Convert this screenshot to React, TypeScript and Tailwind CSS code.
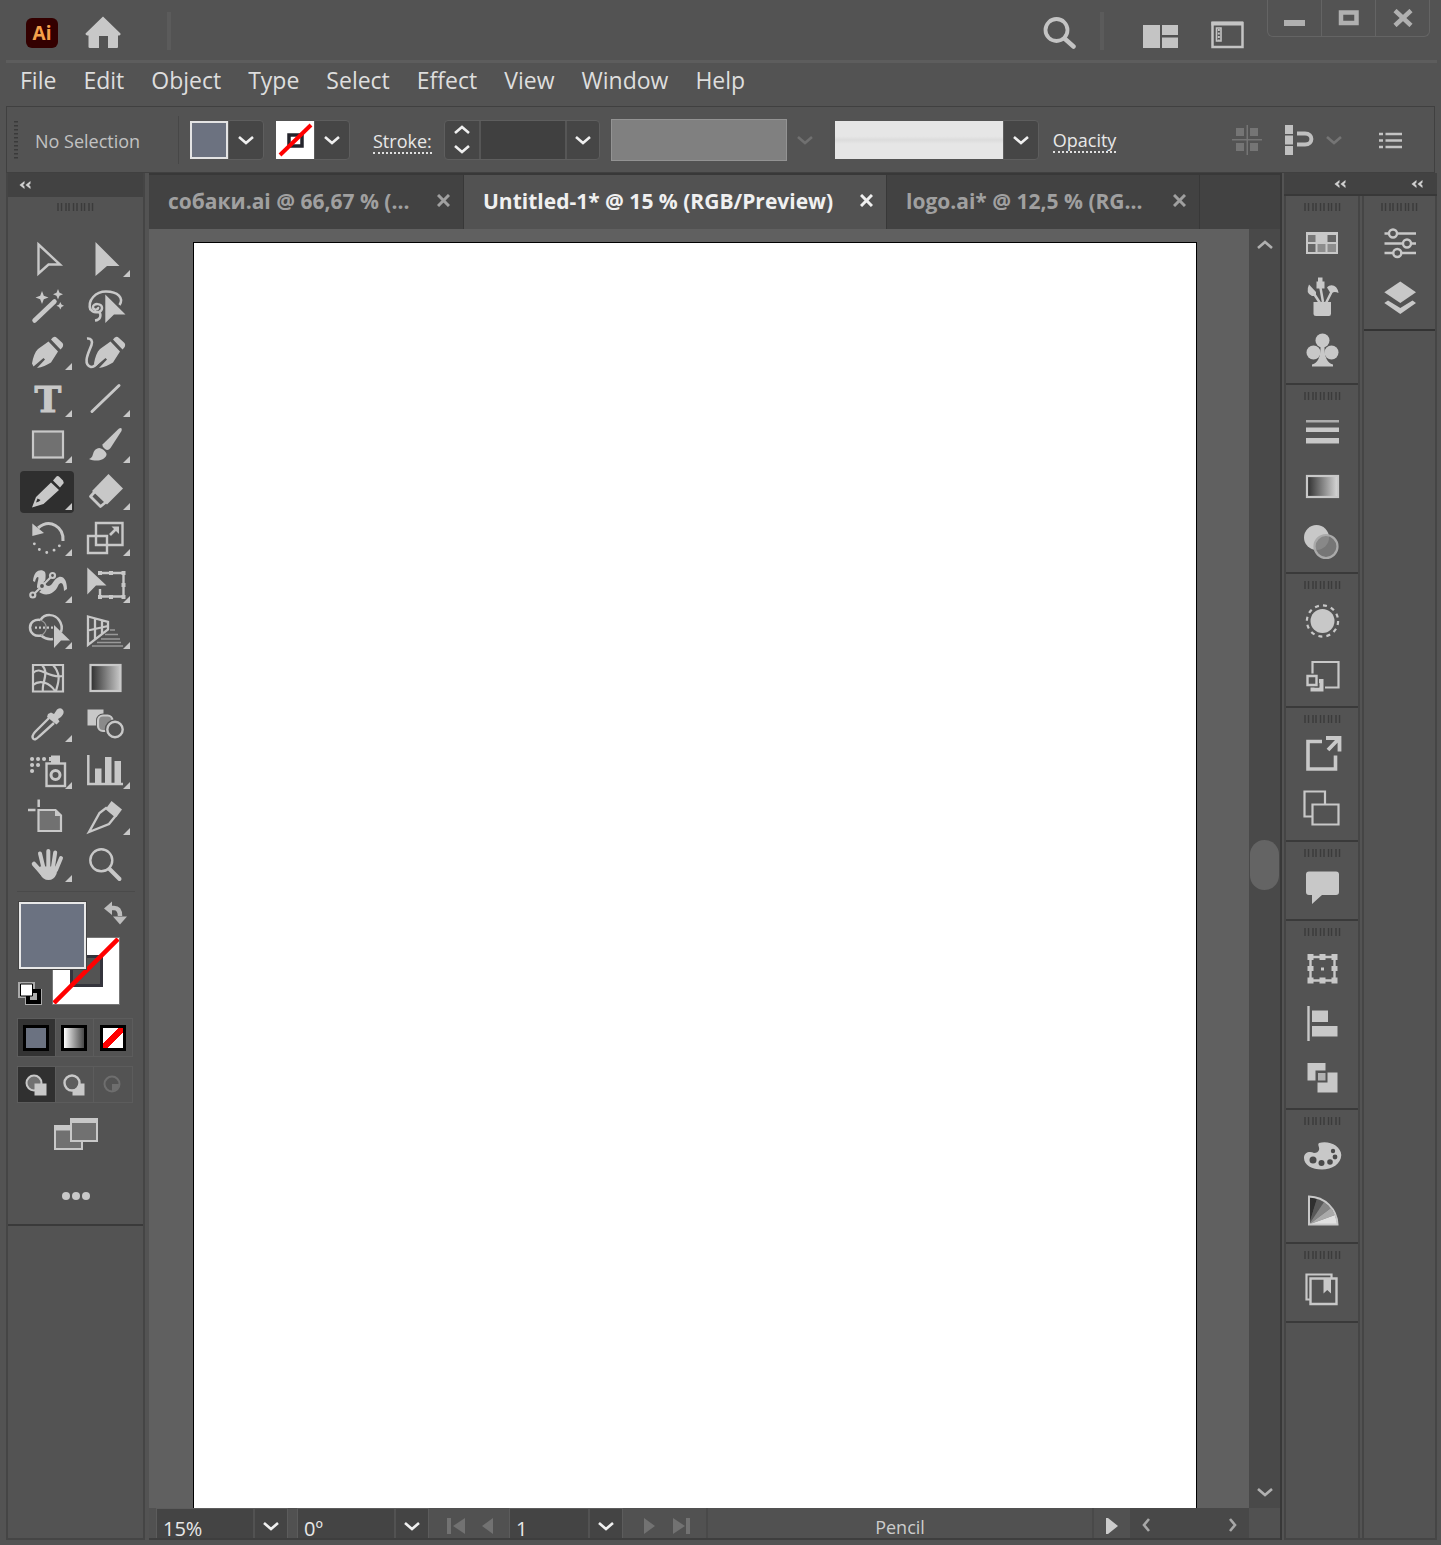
import React from "react";

type IconProps = { children: React.ReactNode };

const ToolIcon: React.FC<IconProps> = ({ children }) => (
  <svg viewBox="0 0 54 42" className="w-[54px] h-[42px] overflow-visible" fill="none" stroke="#c8c8c8" strokeWidth="2.200">
    {children}
  </svg>
);

const PanelIcon: React.FC<IconProps> = ({ children }) => (
  <svg viewBox="0 0 54 54" className="w-[54px] h-[54px]" fill="none" stroke="#c8c8c8" strokeWidth="2.200">
    {children}
  </svg>
);

const Chevron: React.FC<{ dir?: "down" | "up" | "left" | "right"; color?: string }> = ({
  dir = "down",
  color = "#f0f0f0",
}) => {
  const paths = {
    down: "M1 5l7 6l7-6",
    up: "M1 11l7-6l7 6",
    left: "M11 2l-5 6l5 6",
    right: "M5 2l5 6l-5 6",
  };
  return (
    <svg viewBox="0 0 16 16" className="w-4 h-4 shrink-0" fill="none" stroke={color} strokeWidth="2.6">
      <path d={paths[dir]} />
    </svg>
  );
};

const Collapse = () => (
  <svg viewBox="0 0 12 8" className="w-3 h-2" fill="#cfcfcf">
    <path d="M5.500 0V2.500L4 4L5.500 5.500V8L0.500 4ZM11.500 0V2.500L10 4L11.500 5.500V8L6.500 4Z" />
  </svg>
);

const Grip = () => (
  <svg viewBox="0 0 37 8" className="w-[37px] h-2" stroke="#3b3b3b" strokeWidth="1.400">
    <path d="M1 0v8M4.500 0v8M9 0v8M12 0v8M16.500 0v8M20 0v8M24.500 0v8M27.500 0v8M32 0v8M35.500 0v8" />
  </svg>
);

const PenShape = () => (
  <>
    <path
      d="M12 32.500C13 26 15 21 18 18L28.500 10.500L38 20.500L31 31.500C27 34 22 36.500 17 37L25 28.500L23.500 27L13.500 35.500Z"
      fill="#c8c8c8"
      stroke="none"
    />
    <path d="M31 8.500Q34 4 37 7L42.500 12Q44.500 15 40.500 18.500Z" fill="#c8c8c8" stroke="none" />
  </>
);

const tools: { name: string; more?: boolean; active?: boolean; icon: React.ReactNode }[] = [
  {
    name: "Direct Selection",
    icon: <path d="M18.500 6.500L40 26.500L28.500 26.500L18.500 35.500Z" strokeWidth="2.400" />,
  },
  {
    name: "Selection",
    more: true,
    icon: <path d="M17.500 4L41.500 28H29L17.500 38Z" fill="#c8c8c8" stroke="none" />,
  },
  {
    name: "Magic Wand",
    icon: (
      <>
        <path d="M14.500 35.500L34.500 16.500" strokeWidth="4.500" strokeLinecap="round" />
        <g fill="#c8c8c8" stroke="none">
          <path d="M22 6L23.800 10.700L28.500 12.500L23.800 14.300L22 19L20.200 14.300L15.500 12.500L20.200 10.700Z" />
          <path d="M38 4L39.500 7.700L43 9.200L39.500 10.700L38 14.500L36.500 10.700L33 9.200L36.500 7.700Z" />
          <path d="M40.300 17L41.500 19.600L44 20.800L41.500 22L40.300 24.500L39.100 22L36.500 20.800L39.100 19.600Z" />
        </g>
      </>
    ),
  },
  {
    name: "Lasso",
    icon: (
      <>
        <path d="M12.500 25C9 15 18 6.500 28 6.500C40 6.500 46 13 41.500 20" strokeWidth="2.500" />
        <path d="M12.500 24C15 29 24 28 24 23C24 18 15 18 15 22C15 26 21 25 20 22M21 26C24 31 22 35 17 35.500" strokeWidth="2.500" />
        <path d="M27.300 9.500L47.500 29.500H36L27.300 38Z" fill="#c8c8c8" stroke="none" />
      </>
    ),
  },
  { name: "Pen", more: true, icon: <PenShape /> },
  {
    name: "Curvature",
    icon: (
      <>
        <path d="M9 7.500C13 7 15 10 13.500 14C11 21 4 33 13 36C16 36 18 34 20 31" strokeWidth="2.600" />
        <g transform="translate(4 0)">
          <PenShape />
        </g>
      </>
    ),
  },
  {
    name: "Type",
    more: true,
    icon: (
      <text x="28" y="34" textAnchor="middle" className="font-['DejaVu_Serif'] font-bold text-[36px] leading-9" fill="#c8c8c8" stroke="#c8c8c8" strokeWidth="1">
        T
      </text>
    ),
  },
  { name: "Line Segment", more: true, icon: <path d="M14 33.500L41 7.500" strokeWidth="3" strokeLinecap="round" /> },
  { name: "Rectangle", more: true, icon: <rect x="13" y="7.500" width="30" height="26" fill="#717171" /> },
  {
    name: "Paintbrush",
    more: true,
    icon: (
      <g fill="#c8c8c8" stroke="none">
        <path d="M41 4.500Q44.500 2.500 43.500 7L32.500 24Q30 27.500 27 25T24.500 20.500Z" />
        <path d="M11 35C16 33.500 14 28.500 17.500 25.500Q21 22.500 25 25.500T28.500 31C26 37.500 17 37.500 11 35Z" />
      </g>
    ),
  },
  {
    name: "Pencil",
    more: true,
    active: true,
    icon: (
      <g fill="#c8c8c8" stroke="none">
        <path fillRule="evenodd" d="M12 36.500L16 26L31 11.500L39 19L23.500 33ZM16 31.500L19 30.500L20.500 29L17.500 27.500Z" />
        <path d="M33 9.500L36 6Q37.500 4 39.500 6L43 9.500Q44.500 11.500 42.500 13.500L40 16.500Z" />
      </g>
    ),
  },
  {
    name: "Eraser",
    more: true,
    icon: (
      <>
        <path d="M30.500 3L45 17.500L29 33.500L14 20Z" fill="#c8c8c8" stroke="none" />
        <path d="M17 20.500L12.500 25.500L22.500 35.500L28 31Z" fill="#535353" strokeWidth="2.800" strokeLinejoin="round" />
      </>
    ),
  },
  {
    name: "Rotate",
    more: true,
    icon: (
      <>
        <path d="M18 11C30 1 44 10 43 24" strokeWidth="3" />
        <path d="M12.300 6.500V19L24 16Z" fill="#c8c8c8" stroke="none" />
        <path d="M14.300 26.800h.1M19.300 32.500h.1M26.700 35.500h.1M34 33.200h.1M39.300 28.800h.1" strokeWidth="2.800" strokeLinecap="round" />
      </>
    ),
  },
  {
    name: "Scale",
    more: true,
    icon: (
      <>
        <path d="M18 6H44.500V28H18ZM10 19H29V36H10Z" strokeWidth="2.400" />
        <path d="M32 18L38 12" strokeWidth="2.600" />
        <path d="M33.500 9.500H41V17Z" fill="#c8c8c8" stroke="none" />
      </>
    ),
  },
  {
    name: "Width",
    more: true,
    icon: (
      <>
        <path
          d="M13 17C14 5 22 5 25 8C27 12 23 21 28 22C33 22 33 15 39 13C44 12 47 17 47 25L44 27C44 20 41 16 38 22C34 31 24 33 18 27C15 23 20 13 18 13Q16 13 15 18Z"
          fill="#c8c8c8"
          stroke="none"
        />
        <path d="M13 31L22 22.500L32.500 12" stroke="#535353" strokeWidth="4" />
        <path d="M14 30L32 12" />
        <g fill="#535353">
          <circle cx="32.500" cy="11.500" r="2.500" />
          <circle cx="22" cy="22" r="3" />
          <circle cx="12.800" cy="31" r="2.500" />
        </g>
      </>
    ),
  },
  {
    name: "Free Transform",
    more: true,
    icon: (
      <>
        <path d="M22 9H45.500V32.500H22V25" strokeWidth="2.400" />
        <path d="M20 7h4v4h-4zM31 7h4v4h-4zM43.500 7h4v4h-4zM43.500 19h4v4h-4zM43.500 31h4v4h-4zM31 31h4v4h-4zM20 31h4v4h-4z" fill="#c8c8c8" stroke="none" />
        <path d="M9.300 3.500L28.500 21.500H18L9.300 30.500Z" fill="#c8c8c8" stroke="none" />
      </>
    ),
  },
  {
    name: "Shape Builder",
    more: true,
    icon: (
      <>
        <path d="M20.500 10C25 3 35 4 39 10C42 14 42 19 41 22M33 29C28 30 24 28 21 25.500C15 27 10 23 10 17.500C10 12 15 9 20.500 10" strokeWidth="2.500" />
        <path d="M20.500 10C28 13 28 22 21 25.500" strokeWidth="1.200" stroke="#9c9c9c" />
        <path d="M15 17.700H34" strokeDasharray="2 2" strokeWidth="2.200" />
        <path d="M34 15L50 30.500H41L34 38Z" fill="#c8c8c8" stroke="none" />
      </>
    ),
  },
  {
    name: "Perspective Grid",
    more: true,
    icon: (
      <>
        <path d="M10 6.500L30 12V19.500L10 35ZM17 8V29.500M24 10V24M10 20.500L30 16" strokeWidth="2.300" />
        <path d="M32 20h5M27 24.500h13M23 29h19M19 32.500h24M14 36h31" stroke="#999999" strokeWidth="1.500" />
      </>
    ),
  },
  {
    name: "Mesh",
    icon: (
      <>
        <path d="M13 8H43V34.500H13Z" />
        <path d="M13 16C21 8 27 22 43 19M13 28C20 22 30 26 35 34M22 8C30 16 21 27 23 34M33 8C42 18 38 26 36 34" />
      </>
    ),
  },
  {
    name: "Gradient",
    icon: (
      <>
        <defs>
          <linearGradient id="tool-gradient">
            <stop offset="0" stopColor="#2e2e2e" />
            <stop offset="1" stopColor="#c8c8c8" />
          </linearGradient>
        </defs>
        <rect x="12.500" y="8" width="30" height="26" fill="url(#tool-gradient)" />
      </>
    ),
  },
  {
    name: "Eyedropper",
    more: true,
    icon: (
      <>
        <path d="M29 15L15 29Q11.500 33 13 35.500T19 33.500L34 20" strokeWidth="2.400" />
        <path d="M28 11L31 9.500L34 11L37 6.500Q41 4 43 7T41 14L38 16L39.500 18.500L36.500 21.500L27 14Z" fill="#c8c8c8" stroke="none" />
      </>
    ),
  },
  {
    name: "Blend",
    icon: (
      <>
        <path d="M9.500 6.500h16v16h-16z" fill="#c8c8c8" stroke="none" />
        <rect x="20" y="12.500" width="14.500" height="15.500" rx="5" fill="#8a8a8a" stroke="#535353" strokeWidth="4" />
        <rect x="20" y="12.500" width="14.500" height="15.500" rx="5" fill="#8a8a8a" />
        <circle cx="37" cy="26.500" r="7.700" fill="#535353" stroke="#535353" strokeWidth="5" />
        <circle cx="37" cy="26.500" r="7.700" strokeWidth="2.400" />
      </>
    ),
  },
  {
    name: "Symbol Sprayer",
    more: true,
    icon: (
      <>
        <path d="M12 9h.1M18 9h.1M24 9h.1M12 15h.1M18 15h.1M12 21h.1" strokeWidth="4" strokeLinecap="round" />
        <rect x="26.500" y="13.500" width="18.500" height="22.500" strokeWidth="2.400" />
        <path d="M31 5.500h9v8h-9zM29 7h3v4h-3z" fill="#c8c8c8" stroke="none" />
        <circle cx="35.500" cy="25" r="4.500" strokeWidth="3" />
      </>
    ),
  },
  {
    name: "Column Graph",
    more: true,
    icon: (
      <>
        <path d="M10.300 5V34H45" strokeWidth="2.500" />
        <path d="M17 18.500h6.500V34H17zM27 7h6.500v27H27zM36.500 11H43v23h-6.500z" fill="#c8c8c8" stroke="none" />
      </>
    ),
  },
  {
    name: "Artboard",
    icon: (
      <>
        <path d="M18.700 3.500V11M8 14H15.500" strokeWidth="2.500" />
        <path d="M18.500 14H35.500L41 19.500V35H18.500Z" fill="#717171" />
        <path d="M35 13L42 20H35Z" fill="#c8c8c8" stroke="none" />
      </>
    ),
  },
  {
    name: "Slice",
    more: true,
    icon: (
      <>
        <path d="M11 36L21.500 17L28 12L37.500 20L31 28Z" strokeWidth="2.400" />
        <path d="M33.500 5L44 13.500L38.500 21L28 12.500Z" fill="#c8c8c8" stroke="none" />
      </>
    ),
  },
  {
    name: "Hand",
    more: true,
    icon: (
      <g strokeLinecap="round">
        <path d="M28.300 8V24M20 10.500L23.500 25M35.200 9.500L33 24M41 15L36 27" strokeWidth="4" />
        <path d="M14 21L22 30" strokeWidth="4.500" />
        <path d="M20 23.500H38L36.500 31Q34 37 28.500 37Q23 37 20 31L17 27Z" fill="#c8c8c8" stroke="none" />
      </g>
    ),
  },
  {
    name: "Zoom",
    icon: (
      <>
        <circle cx="23.300" cy="17.300" r="11" strokeWidth="2.400" />
        <path d="M31.500 26L41.500 36" strokeWidth="4" strokeLinecap="round" />
      </>
    ),
  },
];

const panelGroups: { name: string; icon: React.ReactNode }[][] = [
  [
    {
      name: "Swatches",
      icon: (
        <>
          <path d="M11 15h32v22H11z" fill="#c8c8c8" stroke="none" />
          <path d="M13 18h7.500v7H13z" fill="#777777" stroke="none" />
          <path d="M32.500 18H41v7h-8.500z" fill="#666666" stroke="none" />
          <path d="M13 27h7.500v8H13z" fill="#666666" stroke="none" />
          <path d="M22.500 27h8v8h-8zM32.500 27H41v8h-8.500z" fill="#8d8d8d" stroke="none" />
        </>
      ),
    },
    {
      name: "Brushes",
      icon: (
        <>
          <path d="M18.500 21L25 31M25 13L28 30M38 17L31 31" strokeWidth="2.500" />
          <path d="M14 12.500L21 20V24H17Q10 21 14 12.500ZM23 5.500h4.500v4h2v7h-8v-7H23zM32 15.500C36 11 43 14 43.500 21C40 19 37 20 36 22Z" fill="#c8c8c8" stroke="none" />
          <path d="M18.500 30H36V41.500Q36 44 34 44H21Q18.500 44 18.500 41.500Z" fill="#c8c8c8" stroke="none" />
        </>
      ),
    },
    {
      name: "Symbols",
      icon: (
        <g fill="#c8c8c8" stroke="none">
          <circle cx="27.500" cy="13.500" r="7" />
          <circle cx="18.500" cy="25.500" r="7" />
          <circle cx="36.500" cy="25.500" r="7" />
          <path d="M25.500 19H29.500Q29 35 38 37.500V39.500H17V37.500Q26 35 25.500 19Z" />
        </g>
      ),
    },
  ],
  [
    {
      name: "Stroke",
      icon: (
        <g fill="#c8c8c8" stroke="none">
          <path d="M11 14h33v2.500H11z" fill="#adadad" />
          <path d="M11 21.500h33V26H11zM11 32h33v5.500H11z" />
        </g>
      ),
    },
    {
      name: "Gradient",
      icon: (
        <>
          <defs>
            <linearGradient id="panel-gradient">
              <stop offset="0" stopColor="#2e2e2e" />
              <stop offset="1" stopColor="#d8d8d8" />
            </linearGradient>
          </defs>
          <rect x="12" y="15" width="31" height="21" fill="url(#panel-gradient)" />
        </>
      ),
    },
    {
      name: "Transparency",
      icon: (
        <>
          <circle cx="21.500" cy="21.500" r="12.500" fill="#c8c8c8" stroke="none" />
          <circle cx="31" cy="30.500" r="11.500" fill="#7c7c7c" fillOpacity="0.85" stroke="#aaaaaa" />
        </>
      ),
    },
  ],
  [
    {
      name: "Appearance",
      icon: (
        <>
          <circle cx="27.500" cy="26" r="12" fill="#c8c8c8" stroke="none" />
          <circle cx="27.500" cy="26" r="15.600" strokeDasharray="4 4.170" />
        </>
      ),
    },
    {
      name: "Graphic Styles",
      icon: (
        <>
          <path d="M17.500 12H43.500V37.500H17.500Z" />
          <path d="M17.500 31H26.500V39.500H17.500Z" fill="#535353" stroke="#535353" strokeWidth="7" />
          <path d="M17.500 31H26.500V39.500H17.500Z" strokeWidth="4" />
          <path d="M12.500 26h9v9h-9z" fill="#535353" stroke="#535353" strokeWidth="5" />
          <path d="M12.500 26h9v9h-9z" fill="#535353" strokeWidth="2.400" />
        </>
      ),
    },
  ],
  [
    {
      name: "Asset Export",
      icon: (
        <>
          <path d="M27 12.500H13V40H40.500V26.500" strokeWidth="3.600" />
          <path d="M31 9H44.500V22.500M44 9.500L33 21" strokeWidth="3.800" />
        </>
      ),
    },
    { name: "Artboards", icon: <path d="M17.500 32.500H9.500V7.500H30V20M17.500 20.500H43.500V40.500H17.500Z" /> },
  ],
  [
    {
      name: "Comments",
      icon: <path d="M14 8.500H41Q44 8.500 44 11.500V29Q44 32 41 32H27L17 41V32H14Q11 32 11 29V11.500Q11 8.500 14 8.500Z" fill="#c8c8c8" stroke="none" />,
    },
  ],
  [
    {
      name: "Transform",
      icon: (
        <>
          <path d="M15.500 15H39.500V38.500H15.500Z" strokeWidth="2.400" />
          <path
            d="M12.500 12h6v6h-6zM24.500 12h6v6h-6zM36.500 12h6v6h-6zM12.500 24h6v5h-6zM36.500 24h6v5h-6zM12.500 35.500h6v6h-6zM24.500 35.500h6v6h-6zM36.500 35.500h6v6h-6zM26 25.500h3v3h-3z"
            fill="#c8c8c8"
            stroke="none"
          />
        </>
      ),
    },
    {
      name: "Align",
      icon: (
        <>
          <path d="M13.500 9V44" strokeWidth="2.400" />
          <path d="M17 13.500h16v11.500H17zM17 29h25.500v10.500H17z" fill="#c8c8c8" stroke="none" />
        </>
      ),
    },
    {
      name: "Pathfinder",
      icon: (
        <>
          <path d="M12.500 11H30.500V18.500H20.500V28.500H12.500ZM32.500 20.500H42.500V40.500H22.500V30.500H32.500Z" fill="#c8c8c8" stroke="none" />
          <path d="M23 21h7.500v7.500H23z" fill="#b0b0b0" stroke="none" />
        </>
      ),
    },
  ],
  [
    {
      name: "Color",
      icon: (
        <>
          <path d="M24 19C25 16 22 14 24 12C34 9 46 15 46.300 24C46 33 37 38.500 27 38.500C17 38.500 9 34 9 27C9 21 15 20 19 22C22 22 23 21 24 19Z" fill="#c8c8c8" stroke="none" />
          <g fill="#4a4a4a" stroke="none">
            <circle cx="18" cy="29" r="3.500" />
            <circle cx="26.500" cy="32" r="3" />
            <circle cx="35" cy="31" r="2.800" />
            <circle cx="40" cy="26" r="2.400" />
            <circle cx="38" cy="20" r="2.200" />
          </g>
        </>
      ),
    },
    {
      name: "Color Guide",
      icon: (
        <g stroke="none">
          <path d="M14 38.500V11L22 12.500Z" fill="#303030" />
          <path d="M14 38.500L22 12.500L29 16Z" fill="#585858" />
          <path d="M14 38.500L29 16L36 22Z" fill="#858585" />
          <path d="M14 38.500L36 22L40 29Z" fill="#aaaaaa" />
          <path d="M14 38.500L40 29L42.500 38.500Z" fill="#e0e0e0" />
          <path d="M14 10.500C30 11 42 23 42.500 38.500H14Z" stroke="#c8c8c8" strokeWidth="2" />
        </g>
      ),
    },
  ],
  [
    {
      name: "Libraries",
      icon: (
        <>
          <path d="M15 34.500H11.500V9.500H36.500V13" />
          <path d="M15.500 13.500H41.500V39H15.500Z" strokeWidth="2.400" />
          <path d="M28.500 13.500H36V28.500L32.200 25L28.500 28.500Z" fill="#c8c8c8" stroke="none" />
        </>
      ),
    },
  ],
];

const sidePanel = [
  {
    name: "Properties",
    icon: (
      <g strokeWidth="2.400">
        <path d="M11.500 16.500h4.500M24 16.500h19M11.500 26.500h18M38 26.500h5M11.500 36h8.500M28.500 36H43" />
        <circle cx="20" cy="16.500" r="4" />
        <circle cx="34" cy="26.500" r="4" />
        <circle cx="24.300" cy="36" r="4" />
      </g>
    ),
  },
  {
    name: "Layers",
    icon: (
      <g fill="#c8c8c8" stroke="none">
        <path d="M11.300 20.200L27.300 9.500L43 20.200L27.300 31Z" />
        <path d="M11.300 31L15 28.500L27.300 36L39.500 28.500L43 31L27.300 42Z" />
      </g>
    ),
  },
];

const menuItems = ["File", "Edit", "Object", "Type", "Select", "Effect", "View", "Window", "Help"];

const TitleBar = () => (
  <header className="flex h-[60px] items-start">
    <span className="ml-[26px] mt-[18px] flex h-[30px] w-8 items-center justify-center rounded-md bg-[#330000] text-[19px] font-bold text-[#f5a04a]">
      Ai
    </span>
    <button aria-label="Home" className="ml-[27px] mt-4">
      <svg viewBox="0 0 36 32" className="h-8 w-9" fill="#c8c8c8">
        <path d="M18 0.500L35.500 17.500Q36 19.500 33 19.500V31Q33 32 32 32H23V20H14V32H5Q3.500 32 3.500 31V19.500Q0.500 19.500 0.500 17.500Z" />
      </svg>
    </button>
    <span className="ml-[46px] mt-3 h-[38px] w-1 bg-[#5b5b5b]" />
    <div className="ml-auto flex">
      <button aria-label="Search" className="mt-[14px]">
        <svg viewBox="0 0 33 33" className="h-[33px] w-[33px]" fill="none" stroke="#c4c4c4">
          <circle cx="13.500" cy="14" r="11" strokeWidth="3.800" />
          <path d="M21.500 22.500L30.500 30.500" strokeWidth="4.500" strokeLinecap="round" />
        </svg>
      </button>
      <span className="ml-6 mt-3 h-[38px] w-1 bg-[#5b5b5b]" />
      <button aria-label="Arrange Documents" className="ml-[39px] mt-[22px]">
        <svg viewBox="0 0 36 23" className="h-[23px] w-9" fill="#c4c4c4">
          <path d="M0 0h17v23H0zM19 0h16v10H19zM19 12.500h16V23H19z" />
        </svg>
      </button>
      <button aria-label="Switch Workspace" className="ml-8 mt-[19px]">
        <svg viewBox="0 0 33 28" className="h-7 w-[33px]" fill="none" stroke="#c4c4c4">
          <path d="M1.500 2H31.500V26H1.500Z" strokeWidth="2.500" />
          <path d="M0.500 2.500H32" strokeWidth="4" />
          <path d="M5.500 7H10V20H5.500Z" strokeWidth="1.600" />
          <path d="M7.800 8V20" strokeWidth="2" strokeDasharray="2 1.500" />
        </svg>
      </button>
      <div className="ml-[23px] mr-[11px] flex h-[37px] w-[163px] divide-x divide-[#646464] rounded-b-md border border-t-0 border-[#646464]">
        <button aria-label="Minimize" className="flex flex-1 items-center justify-center">
          <svg viewBox="0 0 22 18" className="h-[18px] w-[22px]" fill="#b0b0b0">
            <path d="M0 11h21v6H0z" />
          </svg>
        </button>
        <button aria-label="Maximize" className="flex flex-1 items-center justify-center">
          <svg viewBox="0 0 22 18" className="h-[18px] w-[22px]" fill="none" stroke="#b0b0b0" strokeWidth="4.500">
            <path d="M3 3.500H18.500V14H3Z" />
          </svg>
        </button>
        <button aria-label="Close" className="flex flex-1 items-center justify-center">
          <svg viewBox="0 0 22 18" className="h-[18px] w-[22px]" fill="none" stroke="#b0b0b0" strokeWidth="4.500">
            <path d="M3 1.500L19 16.500M19 1.500L3 16.500" />
          </svg>
        </button>
      </div>
    </div>
  </header>
);

const MenuBar = () => (
  <nav className="ml-[6px] mr-1 flex h-[46px] items-start gap-[27px] border-t-[3px] border-[#5d5d5d] pl-[14px] text-[23px] leading-[34px] text-[#dedede]">
    {menuItems.map((item) => (
      <button key={item}>{item}</button>
    ))}
  </nav>
);

const DropButton: React.FC<{ label: string; muted?: boolean }> = ({ label, muted }) =>
  muted ? (
    <button aria-label={label} className="flex h-10 w-9 items-center justify-center">
      <Chevron color="#707070" />
    </button>
  ) : (
    <button
      aria-label={label}
      className="flex h-10 w-9 items-center justify-center rounded-r border border-[#5e5e5e] bg-[#464646]"
    >
      <Chevron />
    </button>
  );

const ControlBar = () => (
  <section className="mx-[6px] flex h-[67px] items-center border border-[#404040] pl-[6px] text-lg font-medium">
    <svg viewBox="0 0 6 38" className="h-[38px] w-[6px]" stroke="#3a3a3a" strokeWidth="4">
      <path d="M3 0V38" strokeDasharray="1.600 2.400" />
    </svg>
    <span className="ml-4 w-[143px] pt-[3px] text-[#c2c2c2]">No Selection</span>
    <span className="h-12 w-px bg-[#474747]" />
    <button aria-label="Fill" className="ml-[11px] h-[38px] w-[38px] border-2 border-[#e4e4e4] bg-[#6c7280]" />
    <DropButton label="Fill options" />
    <button aria-label="Stroke color" className="ml-3 h-[38px] w-[38px] bg-white">
      <svg viewBox="0 0 38 38" className="h-[38px] w-[38px]" fill="none">
        <path d="M13 14H26V25H13Z" stroke="#24242c" strokeWidth="3.500" />
        <path d="M4 34L35 4" stroke="#ff0000" strokeWidth="4" />
      </svg>
    </button>
    <DropButton label="Stroke color options" />
    <label htmlFor="stroke" className="ml-[23px] mt-1 border-b-2 border-dotted border-[#e0e0e0] leading-[22px] text-[#e8e8e8]">
      Stroke:
    </label>
    <div className="ml-3 flex h-10 rounded border border-[#5e5e5e] bg-[#464646]">
      <div className="flex w-[34px] flex-col items-center justify-center gap-[3px]">
        <button aria-label="Increase stroke"><Chevron dir="up" /></button>
        <button aria-label="Decrease stroke"><Chevron /></button>
      </div>
      <input id="stroke" className="w-[88px] border-x-2 border-[#565656] bg-[#404040] px-2 text-white" />
      <button aria-label="Stroke presets" className="flex w-8 items-center justify-center">
        <Chevron />
      </button>
    </div>
    <button aria-label="Width profile" className="ml-[11px] h-[42px] w-44 border border-[#939393] bg-[#808080]" />
    <DropButton label="Profile options" muted />
    <button aria-label="Brush definition" className="ml-3 h-[38px] w-[168px] bg-[linear-gradient(#e6e6e6_40%,#dcdcdc_50%,#e6e6e6_60%)]" />
    <DropButton label="Brush options" />
    <button className="ml-[14px] mt-[3px] border-b-2 border-dotted border-[#e0e0e0] leading-[22px] text-[#e8e8e8]">Opacity</button>
    <div className="ml-auto flex items-center">
      <button aria-label="Align">
        <svg viewBox="0 0 30 30" className="h-[30px] w-[30px]" fill="#757575">
          <path d="M4 3h8v8H4zM18 3h8v8h-8zM4 18h8v8H4zM18 18h8v8h-8zM14.500 0h1.500v30h-1.500zM0 14h30v1.500H0z" />
        </svg>
      </button>
      <button aria-label="Snap" className="ml-[22px]">
        <svg viewBox="0 0 30 30" className="h-[30px] w-[30px]" fill="#c0c0c0">
          <path d="M1 0h8v9H1zM1 10.500h8v9H1zM1 21h8v9H1z" />
          <path d="M13 8.500H21C29.500 8.500 29.500 19.500 21 19.500H13" fill="none" stroke="#c0c0c0" strokeWidth="4" />
        </svg>
      </button>
      <button aria-label="Snap options" className="ml-3">
        <Chevron color="#757575" />
      </button>
      <button aria-label="Panel menu" className="ml-[37px] mr-8">
        <svg viewBox="0 0 23 18" className="h-[18px] w-[23px]" stroke="#c4c4c4" strokeWidth="2.600" fill="none">
          <path d="M0 3h4M0 9.500h4M0 16h4M6.500 3H23M6.500 9.500H23M6.500 16H23" />
        </svg>
      </button>
    </div>
  </section>
);

const ColorControls = () => (
  <div className="flex flex-col items-center border-t border-[#4a4a4a]">
    {/* Fill sits on top of stroke, so the swatches share one stacking area */}
    <div className="relative mt-[9px] h-[108px] w-[116px]">
      <button aria-label="Stroke" className="absolute left-[34px] top-9 border border-[#777777] bg-white">
        <svg viewBox="0 0 66 66" className="h-[66px] w-[66px]" fill="none">
          <path d="M18.500 18.500H48.500V47.500H18.500Z" fill="#535353" stroke="#34343c" strokeWidth="3" />
          <path d="M1 65L65 1" stroke="#ff0000" strokeWidth="4.500" />
        </svg>
      </button>
      <button aria-label="Fill" className="absolute left-0 top-0 h-[69px] w-[69px] border border-[#444444] bg-[#e8e8e8] p-0.5">
        <span className="block h-full w-full bg-[#6b7281]" />
      </button>
      <button aria-label="Swap Fill and Stroke" className="absolute right-[7px] top-0">
        <svg viewBox="0 0 24 24" className="h-6 w-6" fill="none" stroke="#bdbdbd">
          <path d="M7 7H11Q17 7 17 15" strokeWidth="4.500" />
          <path d="M9 0.500V14L1 7.500ZM10 15.500H24L17 23.500Z" fill="#bdbdbd" stroke="none" />
        </svg>
      </button>
      <button aria-label="Default Fill and Stroke" className="absolute bottom-[3px] left-0">
        <svg viewBox="0 0 25 25" className="h-[25px] w-[25px]" fill="none">
          <path d="M0 1H17V8H24V24H7V17H0Z" fill="#aaaaaa" />
          <path d="M10 10H21V21H10Z" stroke="#000000" strokeWidth="4" />
          <path d="M2.500 3H14.500V15H2.500Z" fill="#ffffff" stroke="#000000" />
        </svg>
      </button>
    </div>
    <div className="mt-[9px] mr-0.5 flex h-[39px] w-[116px] divide-x divide-[#5c5c5c] border border-[#5c5c5c]">
      <button aria-label="Color" className="flex flex-1 items-center justify-center bg-[#333333]">
        <span className="h-[26px] w-[26px] border-[3px] border-black bg-[#6b7281]" />
      </button>
      <button aria-label="Gradient fill" className="flex flex-1 items-center justify-center">
        <span className="h-[26px] w-[26px] border-[3px] border-black bg-linear-to-r from-white to-[#4a4a4a]" />
      </button>
      <button aria-label="None" className="flex flex-1 items-center justify-center">
        <span className="h-[26px] w-[26px] border-[3px] border-black bg-[linear-gradient(135deg,#fff_39%,#f00_39%,#f00_61%,#fff_61%)]" />
      </button>
    </div>
    <div className="mt-[9px] mr-0.5 flex h-[37px] w-[116px] divide-x divide-[#5c5c5c] border border-[#5c5c5c]">
      <button aria-label="Draw Normal" className="flex flex-1 items-center justify-center bg-[#303030]">
        <svg viewBox="0 0 22 22" className="h-[22px] w-[22px]">
          <circle cx="9" cy="9" r="7.500" fill="#717171" stroke="#c8c8c8" strokeWidth="2" />
          <path d="M9.500 9.500h12v12h-12z" fill="#c8c8c8" />
        </svg>
      </button>
      <button aria-label="Draw Behind" className="flex flex-1 items-center justify-center">
        <svg viewBox="0 0 22 22" className="h-[22px] w-[22px]">
          <path d="M9.500 9.500h12v12h-12z" fill="#c8c8c8" />
          <circle cx="9" cy="9" r="7.500" fill="#5c5c5c" stroke="#c8c8c8" strokeWidth="2.400" />
        </svg>
      </button>
      <button aria-label="Draw Inside" className="flex flex-1 items-center justify-center">
        <svg viewBox="0 0 22 22" className="h-[22px] w-[22px]">
          <circle cx="10" cy="10" r="7.500" fill="none" stroke="#6e6e6e" strokeWidth="2" />
          <path d="M10 10H17Q17 16 10 17Z" fill="#6e6e6e" />
        </svg>
      </button>
    </div>
    <button aria-label="Change Screen Mode" className="mt-[14px]">
      <svg viewBox="0 0 44 34" className="h-[34px] w-11" fill="#717171" stroke="#c8c8c8" strokeWidth="2">
        <path d="M1 9H28V32H1Z" />
        <path d="M1 11H28" strokeWidth="5" />
        <path d="M17 2H43V24H17Z" />
        <path d="M16 3.500H44" strokeWidth="5" />
      </svg>
    </button>
    <button aria-label="Edit Toolbar" className="mb-6 mt-[41px]">
      <svg viewBox="0 0 30 8" className="h-2 w-[30px]" fill="#c8c8c8">
        <circle cx="5" cy="4" r="4" />
        <circle cx="15" cy="4" r="4" />
        <circle cx="25" cy="4" r="4" />
      </svg>
    </button>
  </div>
);

const Toolbar = () => (
  <aside className="flex w-[139px] shrink-0 flex-col border-2 border-t-0 border-[#454545]">
    <button aria-label="Collapse tools" className="flex h-6 items-center bg-[#424242] pl-[11px]">
      <Collapse />
    </button>
    <div className="flex flex-col items-center border-b-2 border-[#3a3a3a]">
      <div className="pt-[6px]">
        <Grip />
      </div>
      <div className="mt-[25px] grid h-[651px] grid-cols-2 grid-rows-14 place-items-center gap-x-1">
        {tools.map((tool) => (
          <button
            key={tool.name}
            aria-label={tool.name}
            className={tool.active ? "rounded-sm bg-[#2f2f2f]" : "rounded-sm"}
          >
            <ToolIcon>
              {tool.icon}
              {tool.more && <path d="M52 32V39H45Z" fill="#c8c8c8" stroke="none" />}
            </ToolIcon>
          </button>
        ))}
      </div>
      <div className="mt-1">
        <ColorControls />
      </div>
    </div>
  </aside>
);

const CloseIcon = () => (
  <svg viewBox="0 0 13 13" className="h-[13px] w-[13px]" stroke="currentColor" strokeWidth="3">
    <path d="M1 1L12 12M12 1L1 12" />
  </svg>
);

const tabs = [
  { title: "собаки.ai @ 66,67 % (...", width: "w-[315px]" },
  { title: "Untitled-1* @ 15 % (RGB/Preview)", width: "w-[423px]", active: true },
  { title: "logo.ai* @ 12,5 % (RG...", width: "w-[313px]" },
];

const TabBar = () => (
  <div className="flex h-14 border-t-2 border-[#383838] bg-[#424242] text-[21px] font-bold">
    {tabs.map((tab) => (
      <div
        key={tab.title}
        className={`${tab.width} flex shrink-0 items-center justify-between border-r border-[#383838] pl-[19px] pr-[13px] ${
          tab.active ? "bg-[#525252] text-[#f0f0f0]" : "text-[#a0a0a0]"
        }`}
      >
        <button className="whitespace-nowrap">{tab.title}</button>
        <button aria-label={`Close ${tab.title}`} className="pb-1">
          <CloseIcon />
        </button>
      </div>
    ))}
  </div>
);

const StatusField: React.FC<{ label: string; value: string; width: string }> = ({ label, value, width }) => (
  <div className="flex border border-b-0 border-[#5c5c5c] bg-[#444444]">
    <input aria-label={label} defaultValue={value} className={`${width} border-r-2 border-[#525252] pl-[6px] pt-[9px] text-[#e8e8e8]`} />
    <button aria-label={`${label} options`} className="flex w-8 items-center justify-center pt-1">
      <Chevron />
    </button>
  </div>
);

const StepButton: React.FC<{ label: string; d: string }> = ({ label, d }) => (
  <button aria-label={label} className="pt-[6px]">
    <svg viewBox="0 0 20 16" className="h-4 w-5" fill="#727272">
      <path d={d} />
    </svg>
  </button>
);

const StatusBar = () => (
  <footer className="flex h-8 shrink-0 border-b-2 border-[#3e3e3e] bg-[#515151] pl-[7px] text-xl leading-5">
    <StatusField label="Zoom level" value="15%" width="w-[98px]" />
    <span className="w-[9px]" />
    <StatusField label="Rotation" value="0º" width="w-[98px]" />
    <span className="w-[18px]" />
    <StepButton label="First artboard" d="M0 0h4v16H0zM18 0v16L6 8z" />
    <span className="w-3" />
    <StepButton label="Previous artboard" d="M14 0v16L3 8z" />
    <span className="w-[10px]" />
    <StatusField label="Artboard" value="1" width="w-[80px]" />
    <span className="w-[18px]" />
    <StepButton label="Next artboard" d="M3 0v16L14 8z" />
    <span className="w-3" />
    <StepButton label="Last artboard" d="M0 0v16L12 8zM13 0h4v16h-4z" />
    <span className="ml-[13px] flex flex-1 items-center justify-center border-x-2 border-[#494949] pt-2 text-lg text-[#cccccc]">
      Pencil
    </span>
    <button aria-label="Status options" className="flex w-9 items-center justify-center pt-[6px]">
      <svg viewBox="0 0 12 16" className="h-4 w-3" fill="#cccccc">
        <path d="M0 0h2L12 8L2 16H0z" />
      </svg>
    </button>
    <div className="flex w-[119px] items-center justify-between bg-[#484848] px-2 pt-1">
      <button aria-label="Scroll left"><Chevron dir="left" color="#a8a8a8" /></button>
      <button aria-label="Scroll right"><Chevron dir="right" color="#a8a8a8" /></button>
    </div>
    <span className="w-[31px]" />
  </footer>
);

const Workspace = () => (
  <main className="ml-1 flex min-w-0 flex-1 flex-col border-r-2 border-[#383838]">
    <TabBar />
    <div className="flex flex-1 bg-[#606060]">
      <div className="flex flex-1 pl-[44px] pr-[52px] pt-[13px]">
        <div className="flex-1 border border-b-0 border-black bg-white" />
      </div>
      <div className="flex w-[31px] flex-col items-center justify-between bg-[#494949] py-2">
        <button aria-label="Scroll up"><Chevron dir="up" color="#b0b0b0" /></button>
        <div className="mb-2 h-[50px] w-[29px] rounded-full bg-[#646464]" />
        <button aria-label="Scroll down"><Chevron color="#b0b0b0" /></button>
      </div>
    </div>
    <StatusBar />
  </main>
);

const PanelDock = () => (
  <aside className="ml-[2px] mr-1 flex w-[153px] shrink-0 flex-col border-b-2 border-[#454545]">
    <div className="flex h-[23px] shrink-0 border-b-2 border-[#383838] bg-[#424242]">
      <button aria-label="Expand icons" className="flex w-[76px] items-center justify-end pr-[14px]">
        <Collapse />
      </button>
      <button aria-label="Expand properties" className="flex flex-1 items-center justify-end pr-[14px]">
        <Collapse />
      </button>
    </div>
    <div className="flex flex-1">
      <div className="w-[76px] border-x-2 border-[#454545]">
        {panelGroups.map((group) => (
          <div key={group[0].name} className="flex flex-col items-center border-b-2 border-[#3a3a3a] pb-0.5">
            <div className="h-5 pt-[7px]">
              <Grip />
            </div>
            {group.map((item) => (
              <button key={item.name} aria-label={item.name} className="h-[55px]">
                <PanelIcon>{item.icon}</PanelIcon>
              </button>
            ))}
          </div>
        ))}
      </div>
      <div className="ml-[2px] flex-1 border-x-2 border-[#454545]">
        <div className="flex flex-col items-center border-b-2 border-[#333333] pb-[3px]">
          <div className="h-5 pt-[7px]">
            <Grip />
          </div>
          {sidePanel.map((item) => (
            <button key={item.name} aria-label={item.name} className="h-[55px]">
              <PanelIcon>{item.icon}</PanelIcon>
            </button>
          ))}
        </div>
      </div>
    </div>
  </aside>
);

const App: React.FC = () => {
  return (
    <div className="flex min-h-screen flex-col bg-[#535353] pb-[5px] font-['Open_Sans','Noto_Sans',sans-serif]">
      <TitleBar />
      <MenuBar />
      <ControlBar />
      <div className="flex flex-1 pl-[6px]">
        <Toolbar />
        <Workspace />
        <PanelDock />
      </div>
    </div>
  );
};

export default App;
